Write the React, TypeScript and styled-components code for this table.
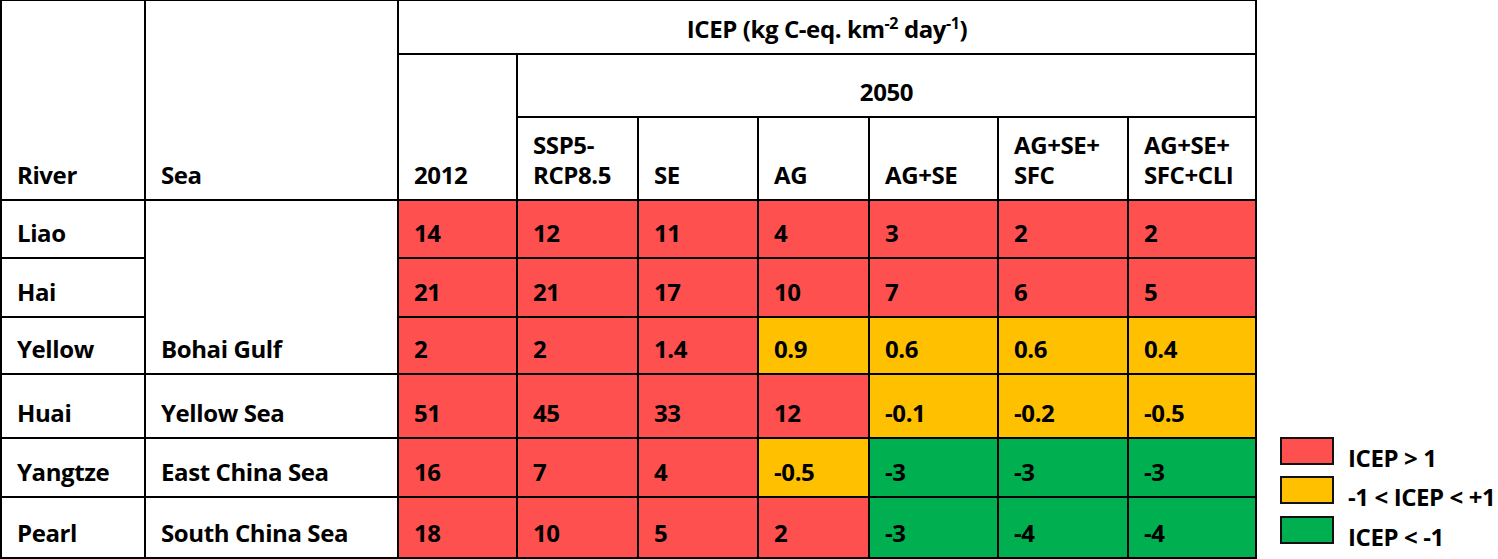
import React from 'react';
import styled, { createGlobalStyle } from 'styled-components';

const GlobalStyle = createGlobalStyle`
  html, body {
    margin: 0;
    padding: 0;
    background: #fff;
  }
  body {
    font-family: "Open Sans", Lato, sans-serif;
    font-weight: 700;
    color: #000;
  }
`;

const RED = '#ff5050';
const YELLOW = '#ffc000';
const GREEN = '#00b050';

const Page = styled.div`
  display: flex;
  align-items: flex-end;
  width: 1498px;
  height: 559px;
`;

const Table = styled.table`
  border-collapse: collapse;
  table-layout: fixed;
  width: 1255px;
  font-size: 24px;
  line-height: 30px;
  letter-spacing: -0.4px;
`;

const HeadCell = styled.th<{ $center?: boolean }>`
  border: 2px solid #000;
  padding: ${p => (p.$center ? '0 4px 9px 4px' : '0 4px 9px 15px')};
  vertical-align: bottom;
  text-align: ${p => (p.$center ? 'center' : 'left')};
  font-weight: 700;
  white-space: nowrap;
`;

const Cell = styled.td<{ $bg?: string }>`
  border: 2px solid #000;
  padding: 0 4px 9px 15px;
  vertical-align: bottom;
  text-align: left;
  background: ${p => p.$bg ?? '#fff'};
  white-space: nowrap;
`;

const Sup = styled.sup`
  font-size: 16px;
  line-height: 0;
`;

const Legend = styled.div`
  display: flex;
  flex-direction: column;
  margin-left: 23px;
  padding-bottom: 4px;
`;

const LegendRow = styled.div`
  display: flex;
  align-items: flex-start;
  gap: 14px;
  height: 39.5px;
`;

const Swatch = styled.div<{ $bg: string }>`
  box-sizing: border-box;
  width: 54px;
  height: 28px;
  border: 2px solid #111;
  background: ${p => p.$bg};
`;

const LegendLabel = styled.span`
  font-size: 24px;
  line-height: 30px;
  letter-spacing: -0.4px;
  margin-top: 6px;
  white-space: nowrap;
`;

const colWidths = [144, 253, 119, 121, 120, 111, 129, 130, 128];
const rowHeights = [58, 59, 57, 64, 59, 61];

type Row = { river: string; values: number[] };

const rows: Row[] = [
  { river: 'Liao', values: [14, 12, 11, 4, 3, 2, 2] },
  { river: 'Hai', values: [21, 21, 17, 10, 7, 6, 5] },
  { river: 'Yellow', values: [2, 2, 1.4, 0.9, 0.6, 0.6, 0.4] },
  { river: 'Huai', values: [51, 45, 33, 12, -0.1, -0.2, -0.5] },
  { river: 'Yangtze', values: [16, 7, 4, -0.5, -3, -3, -3] },
  { river: 'Pearl', values: [18, 10, 5, 2, -3, -4, -4] },
];

const seas: Record<string, string> = {
  Huai: 'Yellow Sea',
  Yangtze: 'East China Sea',
  Pearl: 'South China Sea',
};

const colorFor = (v: number) => (v > 1 ? RED : v < -1 ? GREEN : YELLOW);

const scenarios: React.ReactNode[] = [
  <>SSP5-<br />RCP8.5</>,
  'SE',
  'AG',
  'AG+SE',
  <>AG+SE+<br />SFC</>,
  <>AG+SE+<br />SFC+CLI</>,
];

export default function App() {
  return (
    <>
      <GlobalStyle />
      <Page>
        <Table>
          <colgroup>
            {colWidths.map((w, i) => (
              <col key={i} style={{ width: w }} />
            ))}
          </colgroup>
          <thead>
            <tr style={{ height: 54 }}>
              <HeadCell rowSpan={3}>River</HeadCell>
              <HeadCell rowSpan={3}>Sea</HeadCell>
              <HeadCell colSpan={8} $center>
                ICEP (kg C-eq. km<Sup>-2</Sup> day<Sup>-1</Sup>)
              </HeadCell>
            </tr>
            <tr style={{ height: 63 }}>
              <HeadCell rowSpan={2}>2012</HeadCell>
              <HeadCell colSpan={7} $center>
                2050
              </HeadCell>
            </tr>
            <tr style={{ height: 83 }}>
              {scenarios.map((s, i) => (
                <HeadCell key={i}>{s}</HeadCell>
              ))}
            </tr>
          </thead>
          <tbody>
            {rows.map((r, i) => (
              <tr key={r.river} style={{ height: rowHeights[i] }}>
                <Cell>{r.river}</Cell>
                {i === 0 && <Cell rowSpan={3}>Bohai Gulf</Cell>}
                {i > 2 && <Cell>{seas[r.river]}</Cell>}
                {r.values.map((v, j) => (
                  <Cell key={j} $bg={colorFor(v)}>
                    {v}
                  </Cell>
                ))}
              </tr>
            ))}
          </tbody>
        </Table>
        <Legend>
          <LegendRow>
            <Swatch $bg={RED} />
            <LegendLabel>ICEP &gt; 1</LegendLabel>
          </LegendRow>
          <LegendRow>
            <Swatch $bg={YELLOW} />
            <LegendLabel>-1 &lt; ICEP &lt; +1</LegendLabel>
          </LegendRow>
          <LegendRow>
            <Swatch $bg={GREEN} />
            <LegendLabel>ICEP &lt; -1</LegendLabel>
          </LegendRow>
        </Legend>
      </Page>
    </>
  );
}
